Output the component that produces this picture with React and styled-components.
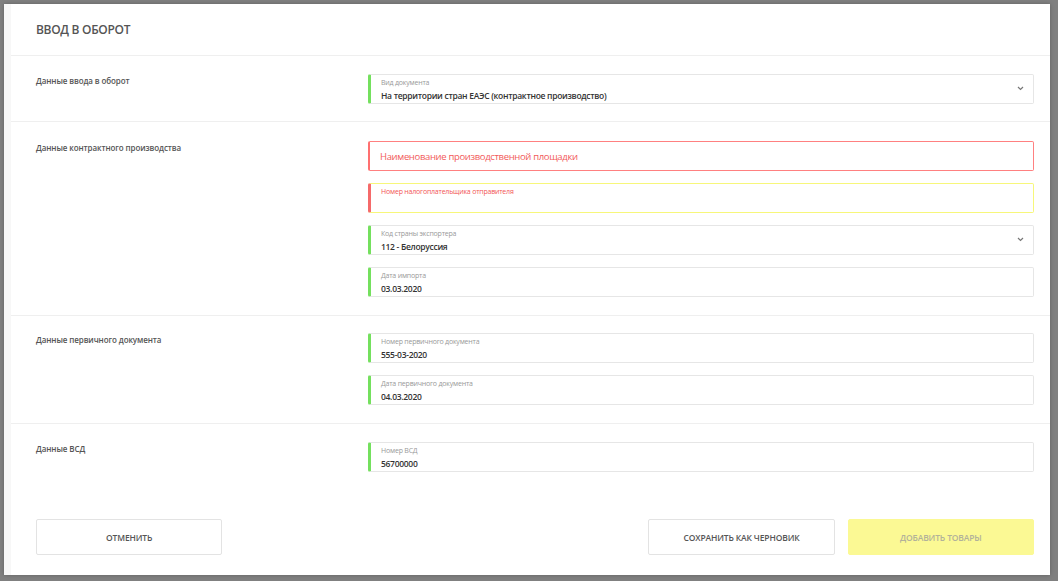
import React from "react";
import styled, { createGlobalStyle } from "styled-components";

const GlobalStyle = createGlobalStyle`
  html, body {
    margin: 0;
    padding: 0;
    background: #808080;
    font-family: "Open Sans", "Liberation Sans", sans-serif;
  }
  * { box-sizing: border-box; }
`;

const Page = styled.div`
  padding: 4px 8px 6px 4px;
`;

const Card = styled.div`
  background: #fff;
  border-left: 7px solid #f7f7f7;
  box-shadow: 0 0 4px rgba(0, 0, 0, 0.25);
  height: 571px;
`;

const Header = styled.div`
  height: 52px;
  border-bottom: 1px solid #efefef;
  padding: 0 25px;
  display: flex;
  align-items: center;

  h1 {
    margin: 0;
    font-size: 12px;
    font-weight: 600;
    color: #555;
    letter-spacing: -0.3px;
  }
`;

const Section = styled.div`
  display: flex;
  padding: ${(p) => p.pt || 18}px 16px ${(p) => p.pb ?? 17}px 25px;
  border-bottom: ${(p) => (p.last ? "none" : "1px solid #efefef")};
`;

const SectionLabel = styled.div`
  width: 332px;
  flex-shrink: 0;
  font-size: 8px;
  font-weight: 600;
  letter-spacing: -0.1px;
  color: #555;
  line-height: 13px;
`;

const Fields = styled.div`
  flex: 1;
  display: flex;
  flex-direction: column;
  gap: 12px;
`;

const Field = styled.div`
  position: relative;
  height: 30px;
  border: 1px solid ${(p) => (p.error ? "#ff8080" : p.warn ? "#f7f77a" : "#e6e6e6")};
  border-left: ${(p) => (p.error ? "2px solid #ff7070" : p.warn ? "3px solid #f56a6a" : "3px solid #74e05e")};
  border-radius: 2px;
  padding: 3px 10px 0 10px;
  display: flex;
  flex-direction: column;
  justify-content: ${(p) => (p.placeholder ? "center" : "flex-start")};
`;

const FieldLabel = styled.div`
  font-size: 7px;
  line-height: 10px;
  letter-spacing: -0.2px;
  color: ${(p) => (p.red ? "#f25555" : "#999")};
  margin-bottom: 2px;
`;

const FieldValue = styled.div`
  font-size: 8.5px;
  font-weight: 600;
  line-height: 12px;
  letter-spacing: -0.3px;
  color: #333;
`;

const Placeholder = styled.div`
  font-size: 9.5px;
  letter-spacing: -0.35px;
  color: #f25a5a;
  margin-top: -3px;
`;

const Chevron = styled.svg`
  position: absolute;
  right: 9px;
  top: 11px;
`;

const Footer = styled.div`
  display: flex;
  padding: 47px 16px 20px 25px;
`;

const Button = styled.button`
  width: 187px;
  height: 36px;
  border: 1px solid ${(p) => (p.primary ? "#fbf994" : "#e3e3e3")};
  background: ${(p) => (p.primary ? "#fbf994" : "#fff")};
  border-radius: 2px;
  font-family: "Open Sans", "Liberation Sans", sans-serif;
  font-size: 8.5px;
  font-weight: 600;
  letter-spacing: -0.15px;
  text-transform: uppercase;
  color: ${(p) => (p.primary ? "#b2b29a" : "#555")};
  margin-left: ${(p) => p.ml || 0}px;
`;

const ChevronIcon = () => (
  <Chevron width="7" height="5" viewBox="0 0 7 5">
    <path d="M1 1 L3.5 3.5 L6 1" fill="none" stroke="#777" strokeWidth="1.2" />
  </Chevron>
);

const InputField = ({ label, value, select }) => (
  <Field>
    <FieldLabel>{label}</FieldLabel>
    <FieldValue>{value}</FieldValue>
    {select && <ChevronIcon />}
  </Field>
);

const App = () => {
  return (
    <>
      <GlobalStyle />
      <Page>
        <Card>
          <Header>
            <h1>ВВОД В ОБОРОТ</h1>
          </Header>

          <Section>
            <SectionLabel>Данные ввода в оборот</SectionLabel>
            <Fields>
              <InputField
                label="Вид документа"
                value="На территории стран ЕАЭС (контрактное производство)"
                select
              />
            </Fields>
          </Section>

          <Section pt={19} pb={18}>
            <SectionLabel>Данные контрактного производства</SectionLabel>
            <Fields>
              <Field error placeholder>
                <Placeholder>Наименование производственной площадки</Placeholder>
              </Field>
              <Field warn>
                <FieldLabel red>Номер налогоплательщика отправителя</FieldLabel>
              </Field>
              <InputField label="Код страны экспортера" value="112 - Белоруссия" select />
              <InputField label="Дата импорта" value="03.03.2020" />
            </Fields>
          </Section>

          <Section pt={17} pb={18}>
            <SectionLabel>Данные первичного документа</SectionLabel>
            <Fields>
              <InputField label="Номер первичного документа" value="555-03-2020" />
              <InputField label="Дата первичного документа" value="04.03.2020" />
            </Fields>
          </Section>

          <Section pt={18} pb={0} last>
            <SectionLabel>Данные ВСД</SectionLabel>
            <Fields>
              <InputField label="Номер ВСД" value="56700000" />
            </Fields>
          </Section>

          <Footer>
            <Button>Отменить</Button>
            <Button ml={426}>Сохранить как черновик</Button>
            <Button primary ml={13}>
              Добавить товары
            </Button>
          </Footer>
        </Card>
      </Page>
    </>
  );
};

export default App;
